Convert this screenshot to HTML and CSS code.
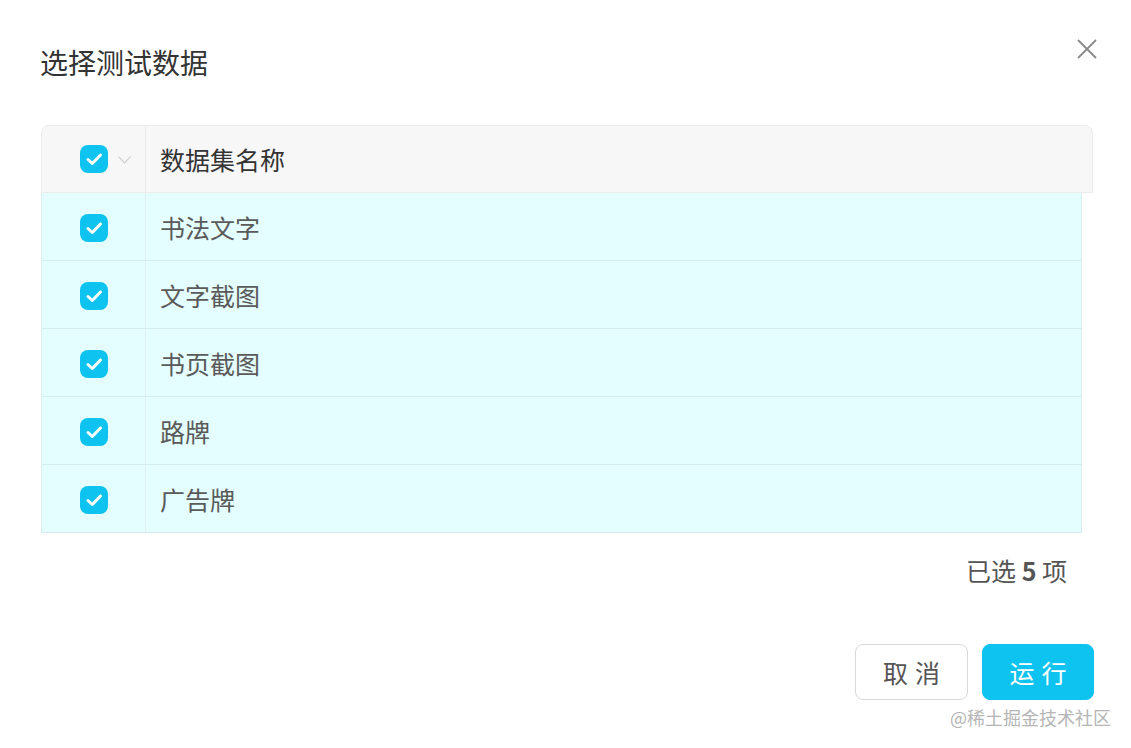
FILE: index.html
```html
<!DOCTYPE html>
<html lang="zh-CN">
<head>
<meta charset="utf-8">
<title>选择测试数据</title>
<link rel="stylesheet" href="styles.css">
</head>
<body>
<div class="dialog">
  <div class="dialog-header">
    <h1 class="dialog-title">选择测试数据</h1>
    <button class="close-btn" aria-label="关闭">
      <svg width="20" height="20" viewBox="0 0 20 20"><path d="M1 1 L19 19 M19 1 L1 19" stroke="#8a8a8a" stroke-width="1.8" fill="none"/></svg>
    </button>
  </div>

  <div class="table">
    <div class="row head">
      <div class="cell sel">
        <span class="checkbox">
          <svg width="28" height="28" viewBox="0 0 28 28"><rect width="28" height="28" rx="8" fill="#0ec3f0"/><path d="M8 14.5 L12.3 18.5 L20.5 10" stroke="#fff" stroke-width="3" fill="none" stroke-linecap="round" stroke-linejoin="round"/></svg>
        </span>
        <svg class="chev" width="13" height="8" viewBox="0 0 13 8"><path d="M0.5 0.5 L6.5 7 L12.5 0.5" stroke="#c8c8c8" stroke-width="1.1" fill="none"/></svg>
      </div>
      <div class="cell name">数据集名称</div>
    </div>
    <div class="row body">
      <div class="cell sel"><span class="checkbox"><svg width="28" height="28" viewBox="0 0 28 28"><rect width="28" height="28" rx="8" fill="#0ec3f0"/><path d="M8 14.5 L12.3 18.5 L20.5 10" stroke="#fff" stroke-width="3" fill="none" stroke-linecap="round" stroke-linejoin="round"/></svg></span></div>
      <div class="cell name">书法文字</div>
    </div>
    <div class="row body">
      <div class="cell sel"><span class="checkbox"><svg width="28" height="28" viewBox="0 0 28 28"><rect width="28" height="28" rx="8" fill="#0ec3f0"/><path d="M8 14.5 L12.3 18.5 L20.5 10" stroke="#fff" stroke-width="3" fill="none" stroke-linecap="round" stroke-linejoin="round"/></svg></span></div>
      <div class="cell name">文字截图</div>
    </div>
    <div class="row body">
      <div class="cell sel"><span class="checkbox"><svg width="28" height="28" viewBox="0 0 28 28"><rect width="28" height="28" rx="8" fill="#0ec3f0"/><path d="M8 14.5 L12.3 18.5 L20.5 10" stroke="#fff" stroke-width="3" fill="none" stroke-linecap="round" stroke-linejoin="round"/></svg></span></div>
      <div class="cell name">书页截图</div>
    </div>
    <div class="row body">
      <div class="cell sel"><span class="checkbox"><svg width="28" height="28" viewBox="0 0 28 28"><rect width="28" height="28" rx="8" fill="#0ec3f0"/><path d="M8 14.5 L12.3 18.5 L20.5 10" stroke="#fff" stroke-width="3" fill="none" stroke-linecap="round" stroke-linejoin="round"/></svg></span></div>
      <div class="cell name">路牌</div>
    </div>
    <div class="row body">
      <div class="cell sel"><span class="checkbox"><svg width="28" height="28" viewBox="0 0 28 28"><rect width="28" height="28" rx="8" fill="#0ec3f0"/><path d="M8 14.5 L12.3 18.5 L20.5 10" stroke="#fff" stroke-width="3" fill="none" stroke-linecap="round" stroke-linejoin="round"/></svg></span></div>
      <div class="cell name">广告牌</div>
    </div>
  </div>

  <div class="count">已选 <b>5</b> 项</div>

  <div class="footer">
    <button class="btn btn-default">取消</button>
    <button class="btn btn-primary">运行</button>
  </div>

  <div class="watermark">@稀土掘金技术社区</div>
</div>
</body>
</html>
```

FILE: styles.css
```css
html, body {
  margin: 0;
  padding: 0;
  background: #ffffff;
}

body {
  font-family: "Noto Sans CJK SC", "Noto Sans", sans-serif;
  color: #333;
}

.dialog {
  position: relative;
  width: 1131px;
  height: 748px;
  box-sizing: border-box;
  padding: 44px 38px 0 41px;
  display: flex;
  flex-direction: column;
}

.dialog-header {
  display: flex;
  justify-content: space-between;
  align-items: flex-start;
  margin-left: -1px;
}

.dialog-title {
  margin: 0;
  font-size: 28px;
  font-weight: 400;
  line-height: 36px;
  color: #333;
}

.close-btn {
  border: 0;
  background: none;
  padding: 0;
  margin: -5px -4px 0 0;
  width: 20px;
  height: 20px;
  cursor: pointer;
  display: flex;
}

.table {
  margin-top: 45px;
  display: flex;
  flex-direction: column;
}

.row {
  display: flex;
  box-sizing: border-box;
}

.row.head {
  height: 68px;
  width: 1052px;
  background: #f7f7f7;
  border: 1px solid #ececec;
  border-radius: 8px 8px 0 0;
}

.row.body {
  height: 68px;
  width: 1041px;
  background: #e4fdfd;
  border-left: 1px solid #dceff0;
  border-right: 1px solid #d6eef0;
  border-bottom: 1px solid #d4ecee;
}

.cell {
  display: flex;
  align-items: center;
}

.cell.sel {
  width: 104px;
  flex: none;
  padding-left: 38px;
  box-sizing: border-box;
  gap: 10px;
  border-right: 1px solid #e3eeee;
}

.row.head .cell.sel {
  border-right-color: #ebebeb;
}

.row.body .cell.sel {
  padding-top: 2px;
}

.checkbox {
  width: 28px;
  height: 28px;
  display: flex;
}

.chev {
  margin-top: 1px;
}

.cell.name {
  padding-left: 14px;
  font-size: 25px;
}

.row.head .cell.name {
  color: #333;
}

.row.body .cell.name {
  color: #5a5a5a;
}

.count {
  margin-top: 19px;
  text-align: right;
  padding-right: 26px;
  font-size: 25px;
  line-height: 36px;
  color: #555;
}

.count b {
  font-weight: 700;
}

.footer {
  margin-top: 56px;
  display: flex;
  justify-content: flex-end;
  gap: 14px;
  margin-right: -1px;
}

.btn {
  height: 56px;
  width: 113px;
  border-radius: 8px;
  font-family: "Noto Sans CJK SC", "Noto Sans", sans-serif;
  font-size: 25px;
  letter-spacing: 7px;
  padding: 0 0 0 7px;
  cursor: pointer;
  box-sizing: border-box;
}

.btn-default {
  background: #fff;
  border: 1px solid #d9d9d9;
  color: #555;
}

.btn-primary {
  width: 112px;
  background: #0ec3f0;
  border: 1px solid #0ec3f0;
  color: #fff;
}

.watermark {
  position: absolute;
  right: 20px;
  bottom: 19px;
  font-size: 18px;
  line-height: 24px;
  color: #b5b5b5;
}
```
